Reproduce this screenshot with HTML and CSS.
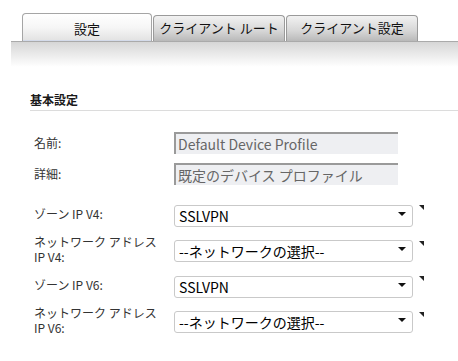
FILE: index.html
```html
<!DOCTYPE html>
<html lang="ja">
<head>
<meta charset="utf-8">
<link rel="stylesheet" href="styles.css">
</head>
<body>
<div class="page">
  <div class="tabs">
    <div class="tab active">設定</div>
    <div class="tab">クライアント ルート</div>
    <div class="tab">クライアント設定</div>
  </div>
  <div class="band"></div>
  <div class="section">
    <div class="section-title">基本設定</div>
    <div class="group inputs">
      <div class="row">
        <label class="label">名前:</label>
        <input class="text" type="text" value="Default Device Profile" readonly>
      </div>
      <div class="row">
        <label class="label">詳細:</label>
        <input class="text" type="text" value="既定のデバイス プロファイル" readonly>
      </div>
    </div>
    <div class="group selects">
      <div class="row srow">
        <label class="label">ゾーン IP V4:</label>
        <div class="select-wrap"><select class="select"><option>SSLVPN</option></select></div>
        <span class="mark"></span>
      </div>
      <div class="row srow">
        <label class="label"><span class="line">ネットワーク アドレス</span><span class="line">IP V4:</span></label>
        <div class="select-wrap"><select class="select"><option>--ネットワークの選択--</option></select></div>
        <span class="mark"></span>
      </div>
      <div class="row srow">
        <label class="label">ゾーン IP V6:</label>
        <div class="select-wrap"><select class="select"><option>SSLVPN</option></select></div>
        <span class="mark"></span>
      </div>
      <div class="row srow">
        <label class="label"><span class="line">ネットワーク アドレス</span><span class="line">IP V6:</span></label>
        <div class="select-wrap"><select class="select"><option>--ネットワークの選択--</option></select></div>
        <span class="mark"></span>
      </div>
    </div>
  </div>
</div>
</body>
</html>
```

FILE: styles.css
```css
* { box-sizing: border-box; }
html, body {
  margin: 0;
  padding: 0;
  background: #fff;
}
body {
  font-family: "Noto Sans CJK JP", "Noto Sans", sans-serif;
  color: #222;
  width: 458px;
  height: 361px;
  overflow: hidden;
}
.page {
  padding-top: 13px;
}
.tabs {
  display: flex;
  align-items: flex-end;
  gap: 1px;
  padding-left: 22px;
  height: 28px;
}
.tab {
  width: 132px;
  height: 26px;
  border: 1px solid #9a9a9a;
  border-bottom: none;
  border-radius: 4px 4px 0 0;
  background: linear-gradient(#f2f2f2, #d6d6d6 60%, #b9b9b9);
  font-size: 13px;
  line-height: 24px;
  color: #111;
  text-align: center;
  white-space: nowrap;
}
.tab.active {
  width: 130px;
  height: 28px;
  background: linear-gradient(#ffffff, #f6f6f6 50%, #e2e2e2);
  border-color: #a5a5a5;
  line-height: 29px;
  box-shadow: inset 0 -1px 0 #d4dbea;
}
.band {
  margin-left: 11px;
  height: 26px;
  border-top: 1px solid #aaaaaa;
  background: linear-gradient(#d6d6d6, #ffffff);
}
.section {
  padding-left: 30px;
  padding-top: 25px;
}
.section-title {
  font-size: 12px;
  font-weight: bold;
  line-height: 16px;
  color: #1a1a1a;
  padding-bottom: 2px;
  border-bottom: 1px solid #dcdcdc;
}
.group.inputs {
  padding-top: 16px;
}
.group.selects {
  padding-top: 7px;
}
.row {
  display: flex;
  align-items: center;
  height: 31px;
  padding-left: 4px;
}
.srow {
  height: 35.5px;
}
.label {
  width: 140px;
  flex: none;
  font-size: 12px;
  line-height: 14px;
  color: #333;
}
.line {
  display: block;
  height: 14px;
  line-height: 14px;
}
.line + .line {
  margin-top: 1px;
}
.text {
  width: 224px;
  height: 22px;
  border: none;
  border-top: 2px solid #9a9a9a;
  border-left: 2px solid #9a9a9a;
  background: #eeeff2;
  color: #666;
  font-family: "Noto Sans CJK JP", "Noto Sans", sans-serif;
  font-size: 14px;
  padding: 0 0 0 2px;
  line-height: 20px;
  outline: none;
}
.select-wrap {
  position: relative;
  width: 239px;
  height: 22px;
}
.select-wrap::after {
  content: "";
  position: absolute;
  right: 7px;
  top: 9px;
  border-left: 4px solid transparent;
  border-right: 4px solid transparent;
  border-top: 4px solid #111;
}
.select {
  appearance: none;
  -webkit-appearance: none;
  width: 100%;
  height: 100%;
  border: 1px solid #c9c9c9;
  border-radius: 3px;
  background: #fff;
  color: #000;
  font-family: "Noto Sans CJK JP", "Noto Sans", sans-serif;
  font-size: 14px;
  padding: 0 0 0 4px;
  line-height: 20px;
  outline: none;
}
.mark {
  align-self: flex-start;
  margin-top: 9px;
  margin-left: 6px;
  width: 0;
  height: 0;
  border-top: 5px solid #222;
  border-left: 5px solid transparent;
}
```
